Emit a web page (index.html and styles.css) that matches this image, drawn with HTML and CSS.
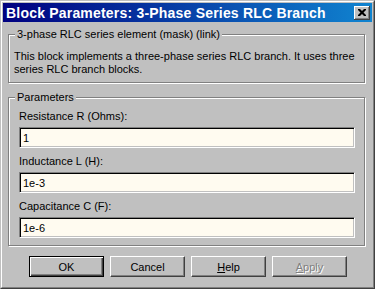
FILE: index.html
```html
<!DOCTYPE html>
<html lang="en">
<head>
    <meta charset="UTF-8">
    <title>Block Parameters: 3-Phase Series RLC Branch</title>
    <link rel="stylesheet" href="styles.css">
</head>
<body>
    <div class="window">
        <div class="window-inner">
            <!-- Title bar -->
            <div class="titlebar">
                <span class="title">Block Parameters: 3-Phase Series RLC Branch</span>
                <button class="close-btn" title="Close">
                    <svg width="8" height="7" viewBox="0 0 8 7">
                        <path d="M0 0h2l2 2 2-2h2v1l-2.5 2.5L8 6v1H6L4 5 2 7H0V6l2.5-2.5L0 1z" fill="#000"/>
                    </svg>
                </button>
            </div>

            <div class="content">
                <!-- Description -->
                <div class="group group-desc">
                    <span class="legend">3-phase RLC series element (mask) (link)</span>
                    <p>This block implements a three-phase series RLC branch. It uses three series RLC branch blocks.</p>
                </div>

                <!-- Parameters -->
                <div class="group group-params">
                    <span class="legend">Parameters</span>
                    <label class="field-label">Resistance R (Ohms):</label>
                    <input class="field" type="text" value="1">
                    <label class="field-label">Inductance L (H):</label>
                    <input class="field" type="text" value="1e-3">
                    <label class="field-label">Capacitance C (F):</label>
                    <input class="field" type="text" value="1e-6">
                </div>

                <!-- Buttons -->
                <div class="buttons">
                    <button class="btn btn-default"><span>OK</span></button>
                    <button class="btn"><span>Cancel</span></button>
                    <button class="btn"><span><u>H</u>elp</span></button>
                    <button class="btn btn-disabled"><span><u>A</u>pply</span></button>
                </div>
            </div>
        </div>
    </div>
</body>
</html>
```

FILE: styles.css
```css
/* Global */
* {
    box-sizing: border-box;
    margin: 0;
    padding: 0;
}
body {
    background-color: #c0c0c0;
    font-family: "Liberation Sans", Arial, sans-serif;
    font-size: 11px;
    color: #000;
}

/* Window frame */
.window {
    width: 375px;
    height: 289px;
    border: 1px solid;
    border-color: #c0c0c0 #404040 #404040 #c0c0c0;
}
.window-inner {
    height: 100%;
    border: 1px solid;
    border-color: #fff #808080 #808080 #fff;
    padding: 1px;
}

/* Title bar */
.titlebar {
    height: 19px;
    background: linear-gradient(to right, #000080, #1084d0);
    display: flex;
    align-items: center;
    justify-content: space-between;
    padding: 0 2px 0 3px;
}
.title {
    color: #fff;
    font-weight: bold;
    font-size: 14px;
    letter-spacing: 0.2px;
    white-space: nowrap;
}
.close-btn {
    width: 16px;
    height: 14px;
    background: #c0c0c0;
    border: none;
    box-shadow: inset -1px -1px 0 #404040, inset 1px 1px 0 #fff, inset -2px -2px 0 #808080;
    display: flex;
    justify-content: center;
    align-items: center;
    padding-bottom: 1px;
}

/* Content */
.content {
    padding: 12px 5px 0 5px;
}

/* Group boxes */
.group {
    position: relative;
    border: 1px solid #808080;
    box-shadow: inset 1px 1px 0 #fff, 1px 1px 0 #fff;
    width: 357px;
}
.legend {
    position: absolute;
    top: -7px;
    left: 6px;
    padding: 0 2px;
    line-height: 13px;
    background-color: #c0c0c0;
}
.group-desc {
    padding: 15px 8px 6px 5px;
}
.group-desc p {
    line-height: 13px;
}
.group-params {
    margin-top: 14px;
    padding: 12px 9px 7px 10px;
    display: flex;
    flex-direction: column;
}
.field-label {
    line-height: 13px;
    margin: 7px 0 4px;
}
.field-label:first-of-type {
    margin-top: 0;
}
.field {
    width: 100%;
    height: 21px;
    font-family: "Liberation Sans", Arial, sans-serif;
    font-size: 11px;
    background-color: #fffbf0;
    border: 1px solid;
    border-color: #808080 #fff #fff #808080;
    box-shadow: inset 1px 1px 0 #000, inset -1px -1px 0 #c0c0c0;
    padding: 1px 3px 0;
    outline: none;
}

/* Buttons */
.buttons {
    display: flex;
    gap: 6px;
    margin-top: 10px;
    padding-left: 21px;
}
.btn {
    width: 75px;
    height: 21px;
    background: #c0c0c0;
    border: 1px solid;
    border-color: #fff #404040 #404040 #fff;
    box-shadow: inset -1px -1px 0 #808080;
    font-family: "Liberation Sans", Arial, sans-serif;
    font-size: 11px;
    color: #000;
}
.btn-default {
    border: 1px solid #000;
    box-shadow: inset 1px 1px 0 #fff, inset -1px -1px 0 #404040, inset -2px -2px 0 #808080;
}
.btn-disabled {
    color: #808080;
    text-shadow: 1px 1px 0 #fff;
}
```
